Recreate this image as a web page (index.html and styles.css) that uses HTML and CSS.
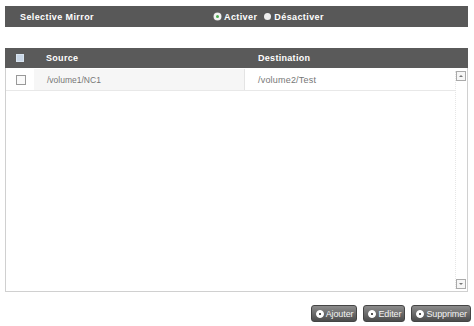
FILE: index.html
```html
<!DOCTYPE html>
<html lang="fr">

<head>
  <meta charset="UTF-8">
  <title>Selective Mirror</title>
  <link rel="stylesheet" href="styles.css">
</head>

<body>
  <div class="page">
    <div class="mirror-bar">
      <span class="bar-title">Selective Mirror</span>
      <div class="radio-group">
        <label class="radio on"><span class="dot"></span>Activer</label>
        <label class="radio"><span class="dot"></span>Désactiver</label>
      </div>
    </div>

    <div class="grid">
      <div class="grid-head">
        <div class="col-check"><span class="box head-box"></span></div>
        <div class="col-source">Source</div>
        <div class="col-dest">Destination</div>
      </div>
      <div class="grid-body">
        <div class="rows">
          <div class="row">
            <div class="col-check"><span class="box"></span></div>
            <div class="col-source">/volume1/NC1</div>
            <div class="col-dest">/volume2/Test</div>
          </div>
        </div>
        <div class="scroll">
          <span class="arrow up"></span>
          <span class="arrow down"></span>
        </div>
      </div>
    </div>

    <div class="actions">
      <button class="button"><span class="icon"></span>Ajouter</button>
      <button class="button"><span class="icon"></span>Editer</button>
      <button class="button"><span class="icon"></span>Supprimer</button>
    </div>
  </div>
</body>

</html>
```

FILE: styles.css
```css
body {
  margin: 0;
  background: #fff;
  font-family: "Liberation Sans", Arial, sans-serif;
}

.page {
  width: 474px;
  height: 326px;
  padding: 6px 6px 0 5px;
  box-sizing: border-box;
}

.mirror-bar {
  height: 21px;
  background: #585858;
  display: flex;
  align-items: center;
  color: #fff;
  font-size: 9px;
  font-weight: bold;
  letter-spacing: 0.4px;
}

.bar-title {
  width: 194px;
  padding-left: 15px;
}

.radio-group {
  display: flex;
  gap: 7px;
}

.radio {
  display: flex;
  align-items: center;
  gap: 3px;
}

.radio .dot {
  width: 7px;
  height: 7px;
  border-radius: 50%;
  background: #eee;
  box-sizing: border-box;
}

.radio.on .dot {
  background: #4caf50;
  border: 2px solid #f4f4f4;
  box-shadow: 0 0 0 0.5px #ddd;
}

.grid {
  margin-top: 21px;
}

.grid-head {
  height: 20px;
  background: #5a5a5a;
  display: flex;
  align-items: center;
  color: #fff;
  font-size: 9px;
  font-weight: bold;
  letter-spacing: 0.3px;
}

.col-check {
  width: 28px;
  display: flex;
  justify-content: center;
}

.col-source {
  width: 211px;
  padding-left: 13px;
  box-sizing: border-box;
}

.col-dest {
  flex: 1;
  padding-left: 14px;
}

.box {
  width: 8px;
  height: 8px;
  border: 1px solid #999;
  background: #fafafa;
  margin-left: 2px;
}

.head-box {
  width: 6px;
  height: 6px;
  border-color: #d8e4f0;
  background: #c9d6e6;
}

.grid-body {
  height: 223px;
  border: 1px solid #d0d0d0;
  border-top: none;
  display: flex;
}

.rows {
  flex: 1;
  padding-top: 1px;
}

.row {
  height: 21px;
  display: flex;
  align-items: center;
  border-bottom: 1px solid #e8e8e8;
  font-size: 9px;
  color: #777;
}

.row .col-source {
  align-self: stretch;
  display: flex;
  align-items: center;
  background: #f6f6f6;
  border-right: 1px solid #e4e4e4;
  font-size: 8.5px;
}

.row .col-dest {
  padding-left: 13px;
  letter-spacing: 0.2px;
}

.scroll {
  width: 10px;
  margin: 3px 1px 2px 0;
  display: flex;
  flex-direction: column;
  justify-content: space-between;
  border-left: 1px dotted #e6e6e6;
}

.arrow {
  width: 8px;
  height: 8px;
  border: 1px solid #aaa;
  background: #f6f6f6;
  position: relative;
}

.arrow::after {
  content: "";
  position: absolute;
  left: 2px;
  border-left: 2px solid transparent;
  border-right: 2px solid transparent;
}

.arrow.up::after {
  top: 3px;
  border-bottom: 2px solid #777;
}

.arrow.down::after {
  top: 3px;
  border-top: 2px solid #777;
}

.actions {
  margin-top: 13px;
  margin-right: -3px;
  display: flex;
  justify-content: flex-end;
  gap: 6px;
}

.button {
  height: 17px;
  padding: 0 3px 0 4px;
  border: 1px solid #444;
  border-radius: 3px;
  background: linear-gradient(#8c8c8c, #4c4c4c);
  color: #f4f4f4;
  font-family: "Liberation Sans", Arial, sans-serif;
  font-size: 9px;
  letter-spacing: -0.1px;
  display: flex;
  align-items: center;
  gap: 2px;
  cursor: pointer;
}

.button .icon {
  width: 6px;
  height: 6px;
  border-radius: 50%;
  background: #fff;
  border: 1px solid #fff;
  box-sizing: content-box;
  position: relative;
}

.button .icon::after {
  content: "";
  position: absolute;
  left: 2px;
  top: 2px;
  width: 2px;
  height: 2px;
  background: #555;
}
```
